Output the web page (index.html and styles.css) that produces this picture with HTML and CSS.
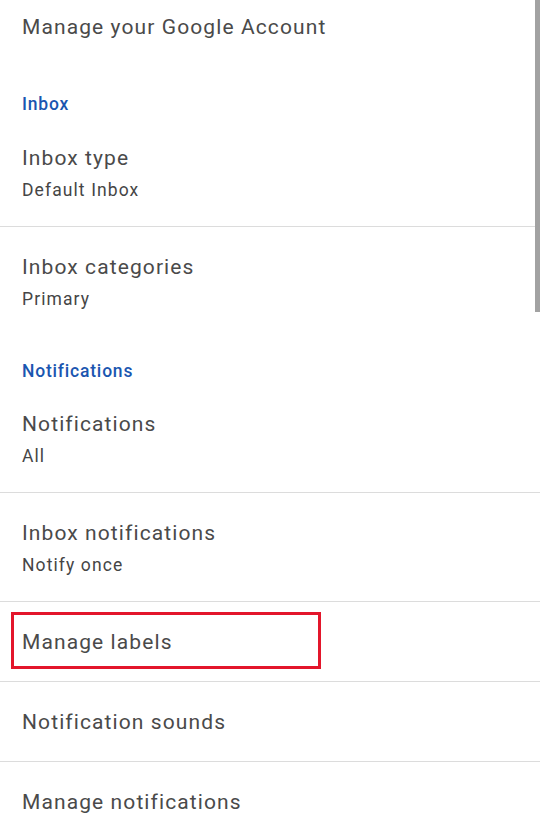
FILE: index.html
```html
<!DOCTYPE html>
<html>
<head>
<meta charset="utf-8">
<link rel="stylesheet" href="styles.css">
</head>
<body>
<div class="screen">
  <div class="row account"><div class="title">Manage your Google Account</div></div>
  <div class="section">Inbox</div>
  <div class="row divided"><div class="title">Inbox type</div><div class="sub">Default Inbox</div></div>
  <div class="row"><div class="title">Inbox categories</div><div class="sub">Primary</div></div>
  <div class="section second">Notifications</div>
  <div class="row divided"><div class="title">Notifications</div><div class="sub">All</div></div>
  <div class="row divided"><div class="title">Inbox notifications</div><div class="sub">Notify once</div></div>
  <div class="row divided single"><div class="title">Manage labels</div><div class="highlight"></div></div>
  <div class="row divided single"><div class="title">Notification sounds</div></div>
  <div class="row single"><div class="title">Manage notifications</div></div>
  <div class="scrollbar"></div>
</div>
</body>
</html>
```
FILE: styles.css
```css
html, body {
  margin: 0;
  padding: 0;
  background: #ffffff;
}
.screen {
  position: relative;
  width: 540px;
  height: 824px;
  overflow: hidden;
  font-family: Roboto, "Noto Sans", sans-serif;
}
.row {
  position: relative;
  padding: 24px 22px 20px;
}
.row.single {
  padding-bottom: 23px;
}
.row.divided {
  border-bottom: 1px solid #dcdcdc;
}
.row.account {
  padding: 11px 22px 23px;
}
.title {
  font-size: 21px;
  line-height: 32px;
  letter-spacing: 1.1px;
  color: #4a4a4a;
}
.sub {
  font-size: 17.5px;
  line-height: 31px;
  padding-top: 1px;
  letter-spacing: 1.1px;
  color: #454545;
}
.section {
  padding: 26px 22px 2px;
  font-size: 17.5px;
  line-height: 24px;
  letter-spacing: 0.8px;
  font-weight: 500;
  color: #1a56b0;
}
.section.second {
  padding-top: 24px;
  padding-bottom: 1px;
}
.highlight {
  position: absolute;
  left: 11px;
  top: 10px;
  width: 304px;
  height: 51px;
  border: 3px solid #e3162b;
}
.scrollbar {
  position: absolute;
  right: 0;
  top: 0;
  width: 5px;
  height: 312px;
  background: #a2a2a2;
}
```
